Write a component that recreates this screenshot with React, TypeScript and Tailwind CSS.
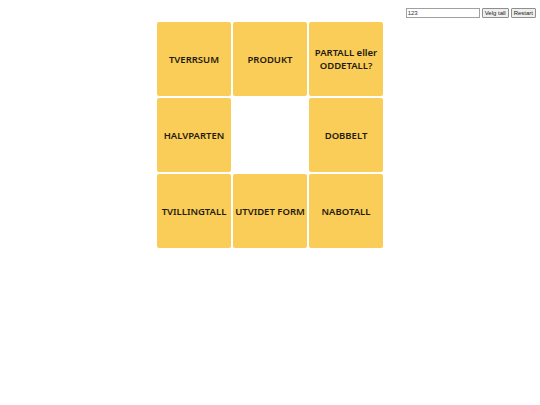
import React from "react";

const tiles: (string | null)[] = [
  "TVERRSUM",
  "PRODUKT",
  "PARTALL eller ODDETALL?",
  "HALVPARTEN",
  null,
  "DOBBELT",
  "TVILLINGTALL",
  "UTVIDET FORM",
  "NABOTALL",
];

export default function App() {
  return (
    <div className="relative w-[540px] h-[405px] bg-white" style={{ fontFamily: '"Noto Sans", sans-serif' }}>
      <div className="absolute top-[8px] right-[4px] flex items-center gap-[2px]" style={{ fontFamily: '"Liberation Sans", Arial, sans-serif' }}>
        <input
          defaultValue="123"
          className="w-[70px] h-[8px] box-content border border-[#a0a0a0] text-[6px] leading-[8px] px-[1px] text-[#333] outline-none"
        />
        <button className="h-[8px] box-content border border-[#8f8f8f] rounded-[1px] bg-[#efefef] text-[6px] leading-[8px] px-[2px] text-[#222]">
          Velg tall
        </button>
        <button className="h-[8px] box-content border border-[#8f8f8f] rounded-[1px] bg-[#efefef] text-[6px] leading-[8px] px-[2px] text-[#222]">
          Restart
        </button>
      </div>
      <div className="pt-[22px] flex justify-center">
        <div className="grid grid-cols-[repeat(3,74px)] grid-rows-[repeat(3,74px)] gap-[2px]">
          {tiles.map((t, i) =>
            t ? (
              <div
                key={i}
                className="bg-[#f9cd57] rounded-[2px] flex items-center justify-center text-center text-[9.5px] leading-[13px] font-semibold text-[#1f1a10]"
              >
                {t}
              </div>
            ) : (
              <div key={i} />
            )
          )}
        </div>
      </div>
    </div>
  );
}
